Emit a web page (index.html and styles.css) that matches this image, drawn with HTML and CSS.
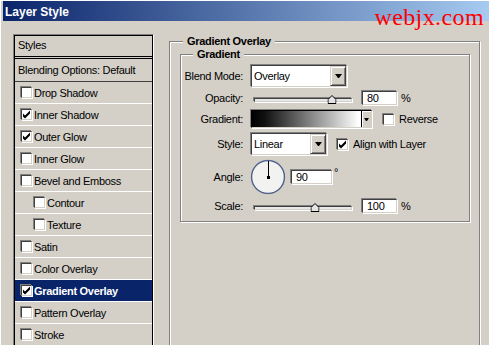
FILE: index.html
```html
<!DOCTYPE html>
<html lang="en">
<head>
    <meta charset="UTF-8">
    <title>Layer Style</title>
    <link rel="stylesheet" href="styles.css">
</head>
<body>
    <div class="window">
        <div class="titlebar">Layer Style</div>
        <div class="watermark">webjx.com</div>

        <div class="dialog-body">
            <div class="style-list">
                <div class="style-list-inner">
                    <div class="list-head">Styles</div>
                    <div class="list-blend">Blending Options: Default</div>
                    <div class="list-item"><span class="check"></span>Drop Shadow</div>
                    <div class="list-item"><span class="check"><svg width="9" height="9" viewBox="0 0 9 9"><polygon points="1,3.5 3,5.5 8,0.5 8,3.5 3,8.5 1,6.5" fill="#000"/></svg></span>Inner Shadow</div>
                    <div class="list-item"><span class="check"><svg width="9" height="9" viewBox="0 0 9 9"><polygon points="1,3.5 3,5.5 8,0.5 8,3.5 3,8.5 1,6.5" fill="#000"/></svg></span>Outer Glow</div>
                    <div class="list-item"><span class="check"></span>Inner Glow</div>
                    <div class="list-item"><span class="check"></span>Bevel and Emboss</div>
                    <div class="list-item sub"><span class="check"></span>Contour</div>
                    <div class="list-item sub"><span class="check"></span>Texture</div>
                    <div class="list-item"><span class="check"></span>Satin</div>
                    <div class="list-item"><span class="check"></span>Color Overlay</div>
                    <div class="list-item active"><span class="check"><svg width="9" height="9" viewBox="0 0 9 9"><polygon points="1,3.5 3,5.5 8,0.5 8,3.5 3,8.5 1,6.5" fill="#000"/></svg></span>Gradient Overlay</div>
                    <div class="list-item"><span class="check"></span>Pattern Overlay</div>
                    <div class="list-item"><span class="check"></span>Stroke</div>
                </div>
            </div>

            <div class="group group-outer">
                <span class="group-title">Gradient Overlay</span>

                <div class="group group-inner">
                    <span class="group-title">Gradient</span>

                    <div class="row row-blend">
                        <span class="row-label">Blend Mode:</span>
                        <div class="select select-blend sunken">
                            <span class="select-text">Overlay</span>
                            <span class="select-btn"></span>
                        </div>
                    </div>

                    <div class="row row-slider">
                        <span class="row-label">Opacity:</span>
                        <div class="track sunken">
                            <svg class="thumb" style="left: 80%" width="9" height="9" viewBox="0 0 9 9"><polygon points="0.5,8.5 0.5,4.5 4.5,0.5 8.5,4.5 8.5,8.5" fill="#e4e4e4" stroke="#000"/></svg>
                        </div>
                        <span class="field sunken">80</span>
                        <span class="unit">%</span>
                    </div>

                    <div class="row row-gradient">
                        <span class="row-label">Gradient:</span>
                        <div class="gradient-picker sunken">
                            <span class="gradient-fill"></span>
                            <span class="gradient-btn"></span>
                        </div>
                        <span class="check check-reverse"></span>
                        <span class="check-label">Reverse</span>
                    </div>

                    <div class="row row-style">
                        <span class="row-label">Style:</span>
                        <div class="select select-style sunken">
                            <span class="select-text">Linear</span>
                            <span class="select-btn"></span>
                        </div>
                        <span class="check check-align"><svg width="9" height="9" viewBox="0 0 9 9"><polygon points="1,3.5 3,5.5 8,0.5 8,3.5 3,8.5 1,6.5" fill="#000"/></svg></span>
                        <span class="check-label">Align with Layer</span>
                    </div>

                    <div class="row row-angle">
                        <span class="row-label">Angle:</span>
                        <svg class="dial" width="36" height="36" viewBox="0 0 36 36">
                            <circle cx="18" cy="18" r="17.2" fill="#9a9a9a"/>
                            <circle cx="18" cy="18" r="16.4" fill="#f2f2f0" stroke="#4c5f8f" stroke-width="1.3"/>
                            <line x1="18.5" y1="18" x2="18.5" y2="2" stroke="#000"/>
                            <rect x="17" y="17" width="3" height="3" fill="#000"/>
                        </svg>
                        <span class="field field-angle sunken">90</span>
                        <span class="degree">°</span>
                    </div>

                    <div class="row row-slider">
                        <span class="row-label">Scale:</span>
                        <div class="track sunken">
                            <svg class="thumb" style="left: 62.5%" width="9" height="9" viewBox="0 0 9 9"><polygon points="0.5,8.5 0.5,4.5 4.5,0.5 8.5,4.5 8.5,8.5" fill="#e4e4e4" stroke="#000"/></svg>
                        </div>
                        <span class="field sunken">100</span>
                        <span class="unit">%</span>
                    </div>
                </div>
            </div>
        </div>
    </div>
</body>
</html>
```

FILE: styles.css
```css
* {
    box-sizing: border-box;
}
body {
    margin: 0;
    background-color: #d4d0c8;
    font-family: "Liberation Sans", Arial, sans-serif;
    font-size: 11px;
    letter-spacing: -0.3px;
    color: #000;
}
.window {
    position: relative;
    width: 489px;
    height: 345px;
    overflow: hidden;
    background-color: #d4d0c8;
    border-top: 1px solid #fff;
    border-left: 1px solid #fff;
}
.titlebar {
    height: 20px;
    margin-left: 2px;
    padding: 2px 0 0 2px;
    line-height: 18px;
    background: linear-gradient(to right, #0a246a, #a6caf0);
    color: #fff;
    font-size: 12px;
    font-weight: bold;
    letter-spacing: 0;
}
.watermark {
    position: absolute;
    top: 4px;
    right: 5px;
    font-family: "Liberation Serif", serif;
    font-size: 24px;
    line-height: 24px;
    letter-spacing: 0.4px;
    color: #ff0000;
}
.dialog-body {
    display: flex;
    align-items: flex-start;
    padding: 13px 0 0 12px;
}

/* left list */
.style-list {
    width: 141px;
    height: 330px;
    flex: none;
    border: 1px solid;
    border-color: #808080 #fff #fff #808080;
}
.style-list-inner {
    height: 100%;
    border: 1px solid #000;
}
.list-head {
    height: 23px;
    line-height: 19px;
    padding-left: 3px;
    border-bottom: 3px double #000;
}
.list-blend {
    height: 23px;
    line-height: 22px;
    padding-left: 3px;
    border-bottom: 1px solid #404040;
}
.list-item {
    display: flex;
    align-items: center;
    height: 22px;
    padding-left: 6px;
    border-bottom: 1px solid #fff;
}
.list-item.sub {
    padding-left: 19px;
}
.list-item.active {
    background-color: #0a246a;
    color: #fff;
    font-weight: bold;
}
.check {
    display: flex;
    align-items: center;
    justify-content: center;
    flex: none;
    width: 11px;
    height: 11px;
    margin-right: 2px;
    background-color: #fff;
    border: 1px solid;
    border-color: #404040 #d4d0c8 #d4d0c8 #404040;
    box-shadow: -1px -1px 0 #808080, 1px 1px 0 #fff;
}

/* group boxes */
.group {
    position: relative;
    border: 1px solid #808080;
    box-shadow: 1px 1px 0 #fff, inset 1px 1px 0 #fff;
}
.group-outer {
    width: 311px;
    height: 330px;
    margin: 7px 0 0 15px;
    padding: 12px 0 0 10px;
}
.group-inner {
    width: 290px;
    padding: 9px 0 5px 0;
}
.group-title {
    position: absolute;
    top: -7px;
    left: 13px;
    padding: 0 4px;
    line-height: 13px;
    background-color: #d4d0c8;
    font-weight: bold;
}
.group-inner > .group-title {
    left: 12px;
}

/* rows */
.row {
    display: flex;
    align-items: center;
}
.row-label {
    width: 62px;
    margin-right: 8px;
    text-align: right;
}
.row-blend { height: 24px; }
.row-slider { height: 20px; }
.row-gradient { height: 22px; }
.row-style { height: 28px; }
.row-angle { height: 38px; }

.sunken {
    background-color: #fff;
    border: 1px solid;
    border-color: #404040 #d4d0c8 #d4d0c8 #404040;
    box-shadow: -1px -1px 0 #808080, 1px 1px 0 #fff;
}
.select {
    display: flex;
    height: 22px;
}
.select-blend { width: 96px; }
.select-style { width: 76px; }
.select-text {
    flex: 1;
    padding-left: 2px;
    line-height: 20px;
}
.select-btn {
    display: flex;
    align-items: center;
    justify-content: center;
    width: 16px;
    background-color: #d4d0c8;
    border: 1px solid;
    border-color: #d4d0c8 #404040 #404040 #d4d0c8;
    box-shadow: inset 1px 1px 0 #fff, inset -1px -1px 0 #808080;
}
.select-btn::after {
    content: "";
    width: 1px;
    border-top: 4px solid #000;
    border-left: 3px solid transparent;
    border-right: 3px solid transparent;
}

.track {
    position: relative;
    width: 98px;
    height: 4px;
    margin: 4px 0 0 3px;
    background-color: #e8e8e8;
}
.thumb {
    position: absolute;
    bottom: -3px;
    transform: translateX(-50%);
}
.field {
    width: 35px;
    height: 14px;
    margin-left: 10px;
    padding-left: 4px;
    line-height: 12px;
}
.unit {
    margin-left: 4px;
}

.gradient-picker {
    display: flex;
    width: 121px;
    height: 18px;
    border-color: #000 #d4d0c8 #d4d0c8 #000;
}
.gradient-fill {
    flex: 1;
    background: linear-gradient(to right, #000, #111 12%, #fff 98%);
}
.gradient-btn {
    display: flex;
    align-items: center;
    justify-content: center;
    width: 10px;
    border-left: 1px solid #000;
    background-color: #d4d0c8;
    box-shadow: inset 1px 1px 0 #fff;
}
.gradient-btn::after {
    content: "";
    width: 1px;
    border-top: 3px solid #000;
    border-left: 2px solid transparent;
    border-right: 2px solid transparent;
}
.check-reverse {
    margin-left: 11px;
}
.check-align {
    margin-left: 10px;
}
.check-label {
    margin-left: 3px;
}

.dial {
    margin-left: -1px;
}
.field-angle {
    width: 41px;
    margin-left: 5px;
}
.degree {
    margin: 0 0 10px 2px;
}
```
